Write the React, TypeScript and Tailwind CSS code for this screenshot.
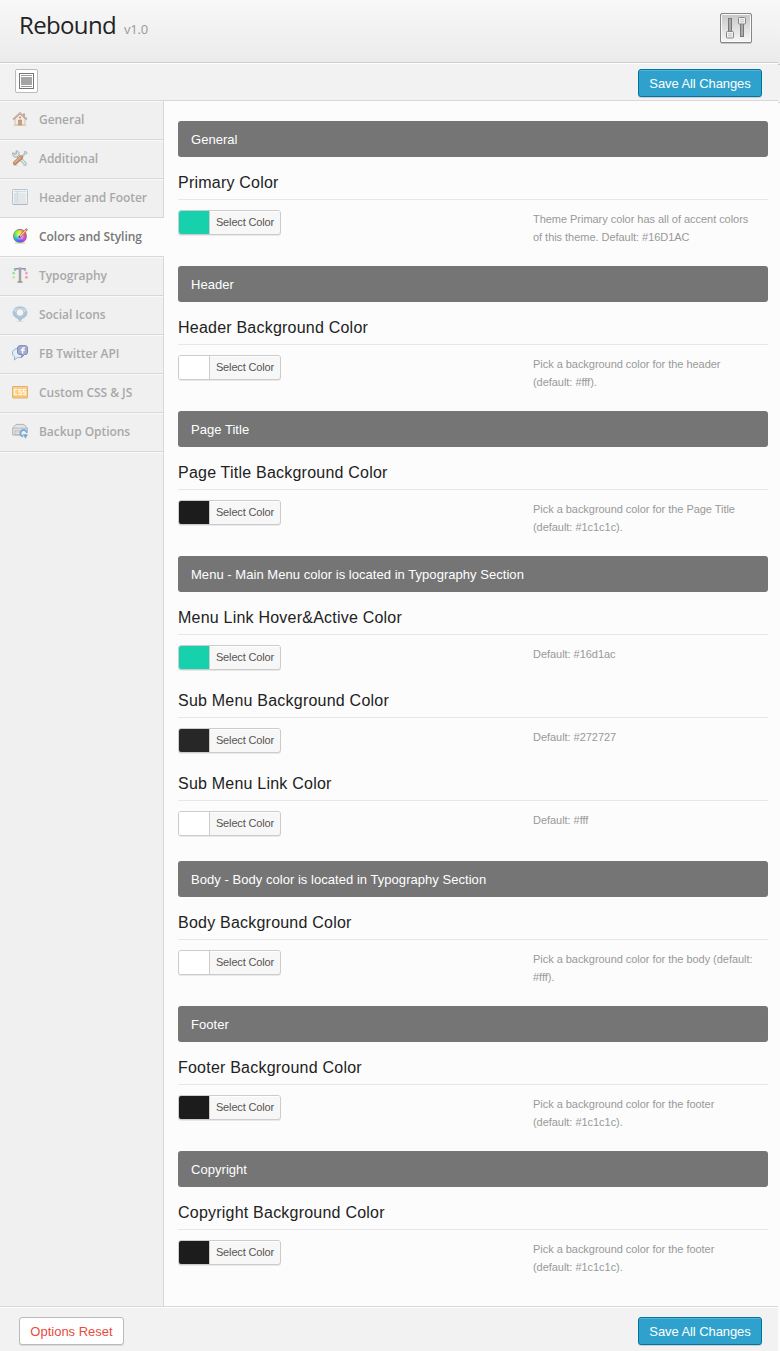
import type { ReactNode } from "react";

type Option = { title: string; color: string; help: string[] };
type Section = { name: string; options: Option[] };

const sections: Section[] = [
  { name: "General", options: [{ title: "Primary Color", color: "bg-[#16d1ac]", help: ["Theme Primary color has all of accent colors", "of this theme. Default: #16D1AC"] }] },
  { name: "Header", options: [{ title: "Header Background Color", color: "bg-white", help: ["Pick a background color for the header", "(default: #fff)."] }] },
  { name: "Page Title", options: [{ title: "Page Title Background Color", color: "bg-[#1c1c1c]", help: ["Pick a background color for the Page Title", "(default: #1c1c1c)."] }] },
  {
    name: "Menu - Main Menu color is located in Typography Section",
    options: [
      { title: "Menu Link Hover&Active Color", color: "bg-[#16d1ac]", help: ["Default: #16d1ac"] },
      { title: "Sub Menu Background Color", color: "bg-[#272727]", help: ["Default: #272727"] },
      { title: "Sub Menu Link Color", color: "bg-white", help: ["Default: #fff"] },
    ],
  },
  { name: "Body - Body color is located in Typography Section", options: [{ title: "Body Background Color", color: "bg-white", help: ["Pick a background color for the body (default:", "#fff)."] }] },
  { name: "Footer", options: [{ title: "Footer Background Color", color: "bg-[#1c1c1c]", help: ["Pick a background color for the footer", "(default: #1c1c1c)."] }] },
  { name: "Copyright", options: [{ title: "Copyright Background Color", color: "bg-[#1c1c1c]", help: ["Pick a background color for the footer", "(default: #1c1c1c)."] }] },
];

const Icon = ({ children }: { children: ReactNode }) => (
  <svg width="16" height="16" viewBox="0 0 16 16" className="mb-0.5 block shrink-0">{children}</svg>
);

const HouseIcon = () => (
  <Icon>
    <path d="M1 14.5h14" stroke="#dededb" />
    <path d="M11 2.5h2v4h-2z" fill="#c5a49b" />
    <path d="M3 7.5 8 3l5 4.5v6.5H3z" fill="#f4eae0" stroke="#c9b5a5" strokeWidth=".8" />
    <path d="M1.2 8.3 8 2.2l6.8 6.1" fill="none" stroke="#b99b92" strokeWidth="1.7" />
    <path d="M2.2 7.2 8 2l5.8 5.2" fill="none" stroke="#dbc8c2" strokeWidth=".7" />
    <path d="M6.5 9h3v5h-3z" fill="#ce9f7c" stroke="#ad8671" strokeWidth=".6" />
    <circle cx="8" cy="6.5" r="1" fill="#aa9290" />
    <path d="M3 13.5h3m4 0h3" stroke="#e8c9a9" />
  </Icon>
);

const ToolsIcon = () => (
  <Icon>
    <path d="M1 15.5h5m5 0h4" stroke="#d8d8d8" />
    <path d="m4 4 9 9.7" stroke="#a5b2b2" strokeWidth="3.4" strokeLinecap="round" />
    <path d="m4 4 9 9.7" stroke="#dce4e4" strokeWidth="1.9" strokeLinecap="round" />
    <path d="M.7 2.5v2.2A3 3 0 0 0 6 6.2 3 3 0 0 0 4 .8l.5 2.7-1.6 1z" fill="#dbe4e4" stroke="#9eacac" strokeWidth=".9" />
    <path d="m8 8 4-4.3L13 1l2.3 2-2.5 1.4L9 9" fill="#d5dddd" stroke="#9eabab" strokeWidth=".8" />
    <path d="m3 13 6-5.5" stroke="#ba8661" strokeWidth="4.2" strokeLinecap="round" />
    <path d="m3 12.5 5.5-5.2" stroke="#deaa82" strokeWidth="2" strokeLinecap="round" />
  </Icon>
);

const LayoutIcon = () => (
  <Icon>
    <rect x=".5" y=".5" width="15" height="15" rx=".7" fill="#f0f3f5" stroke="#b8c5d0" />
    <path d="M1 15.3h14" stroke="#acb4bd" />
    <path d="M2 2.5h12" stroke="#d3dee6" />
    <path d="M2 4h2.6v10H2z" fill="#d9e2e8" />
    <path d="M6 4h7.8v10H6z" fill="#e2e7ea" />
    <path d="M5.3 2v12" stroke="#bac9d4" strokeWidth=".8" />
  </Icon>
);

const ColorIcon = () => (
  <Icon>
    <ellipse cx="8" cy="15" rx="6" ry=".9" fill="#dedede" />
    <foreignObject x="1" y="1" width="14" height="14">
      <div className="h-[14px] w-[14px] rounded-full border border-[#77777799] bg-[radial-gradient(circle,#ffffffcc_0%,transparent_58%),conic-gradient(#ffd62e,#f6603e,#f044a0,#c445ff,#5b4dff,#259cf2,#38e775,#8df62c,#ffd62e)]" />
    </foreignObject>
    <path d="m7.5 9 6.8-7.3" stroke="#9f6451" strokeWidth="2.4" strokeLinecap="round" />
    <path d="m8 8.3 6-6.3" stroke="#ffd0b2" strokeWidth="1.1" />
    <path d="m7 9.6.4-1.6 1 .9z" fill="#333" />
    <path d="m13.5 2 1-1 1 1-1 1z" fill="#dd7a7b" />
  </Icon>
);

const TypeIcon = () => (
  <Icon>
    <path d="M3 3.5V1.7h10v1.8M8 1.7v13M5.5 15h5" fill="none" stroke="#929292" strokeWidth="1.6" />
    <path d="M8 3v11" stroke="#8a8a8a" strokeWidth="2.4" />
    <path d="M8 3v11" stroke="#c6c6c6" strokeWidth=".8" />
    <rect x="6.5" y=".3" width="3" height="2" fill="#a5a6ec" />
    <circle cx="3" cy="2.7" r="1.3" fill="#91c3be" />
    <circle cx="1.7" cy="6.2" r="1.4" fill="#9edab3" />
    <circle cx="1.7" cy="10.2" r="1.5" fill="#cce994" />
    <circle cx="13" cy="3" r="1.3" fill="#c6a5dd" />
    <circle cx="14.4" cy="6.2" r="1.4" fill="#dda6d6" />
    <circle cx="14.4" cy="10.2" r="1.5" fill="#f3a4a8" />
  </Icon>
);

const PinIcon = () => (
  <Icon>
    <ellipse cx="8" cy="15.2" rx="4" ry=".6" fill="#ddd" />
    <path d="M8 15.2c-1-2-2.1-2.6-4.2-3.8C-1.1 8.5.5.8 8 .8s9.1 7.7 4.2 10.6C10 12.6 9 13.2 8 15.2z" fill="#a9c6df" stroke="#9bbad5" strokeWidth=".7" />
    <path d="M1.5 5.2C2.3.8 13.3.8 14.5 5c-3 2-9 2-13 .2z" fill="#c7daea" />
    <circle cx="8" cy="6.5" r="3.8" fill="#f3f4f4" stroke="#b0b9bf" strokeWidth=".7" />
  </Icon>
);

const ChatIcon = () => (
  <Icon>
    <path d="M8 4C4 2.7.5 4.8.5 8c0 2 .8 3 2.2 3.7L2.4 15l3-2.5c4 .5 6.6-1 6.6-4" fill="#e2eff7" stroke="#91b3d4" />
    <path d="M8 .7h5.2c1.8 0 2.3 1 2.3 2.5v4c0 1.5-1 2.3-2.5 2.3h-.5l-2.8 2.8.2-2.8H8C6.4 9.5 5.6 8.7 5.6 7V3C5.6 1.6 6.6.7 8 .7z" fill="#a4acd0" stroke="#7c86b5" />
    <path d="M13 2.6c-2-.3-2.4.2-2.4 2v4M8.8 5h4" fill="none" stroke="#fff" strokeWidth="1.3" />
  </Icon>
);

const CssIcon = () => (
  <Icon>
    <rect x=".5" y="2.5" width="15" height="11.5" rx=".4" fill="#fbd083" stroke="#dfaf7d" />
    <path d="M1 13h14" stroke="#f2bc64" />
    <path d="M5.2 5.5H2.5v5h2.7M9.7 5.5H7v2.3h2.2v2.7H6.5M14 5.5h-2.7v2.3h2.2v2.7h-2.7" fill="none" stroke="#fffaf0" strokeWidth="1.2" />
  </Icon>
);

const BackupIcon = () => (
  <Icon>
    <path d="M.7 5 4 1.4h8L15.3 5v7H.7z" fill="#e2e4e5" stroke="#aeb2b5" />
    <path d="M1 5.2h14M3 7.8h9.8v4H3z" fill="none" stroke="#b5babd" />
    <path d="M3.5 9.8h6" stroke="#d0d4d6" />
    <circle cx="12" cy="10.3" r="4.2" fill="#f0f0f0" />
    <path d="M11 13.4A3.3 3.3 0 1 1 15 9.8" fill="none" stroke="#7eadd5" strokeWidth="2" />
    <path d="M10.6 11.2h5.2l-2.2 4.6z" fill="#79a7d1" />
  </Icon>
);

const menu: { label: string; icon: ReactNode; active?: boolean }[] = [
  { label: "General", icon: <HouseIcon /> },
  { label: "Additional", icon: <ToolsIcon /> },
  { label: "Header and Footer", icon: <LayoutIcon /> },
  { label: "Colors and Styling", icon: <ColorIcon />, active: true },
  { label: "Typography", icon: <TypeIcon /> },
  { label: "Social Icons", icon: <PinIcon /> },
  { label: "FB Twitter API", icon: <ChatIcon /> },
  { label: "Custom CSS & JS", icon: <CssIcon /> },
  { label: "Backup Options", icon: <BackupIcon /> },
];

const SlidersIcon = () => (
  <svg width="34" height="34" viewBox="0 0 34 34" className="block">
    <defs>
      <linearGradient id="panel" x2="0" y2="1"><stop stopColor="#c6c6c6" /><stop offset="1" stopColor="#f8f8f8" /></linearGradient>
    </defs>
    <rect x="0" y="2" width="32" height="30" rx="2" fill="#aaa" opacity=".6" />
    <rect x=".5" y="1.5" width="31" height="29" rx="1.5" fill="url(#panel)" stroke="#858585" />
    <rect x="1.5" y="2.5" width="29" height="27" rx="1" fill="none" stroke="#fafafa" />
    <rect x="8.5" y="6.5" width="3" height="14" fill="#aaa" stroke="#777" />
    <rect x="20.5" y="10.5" width="3" height="14" fill="#aaa" stroke="#777" />
    <rect x="6.5" y="19.5" width="7" height="6.5" rx="1" fill="#f3f3f3" stroke="#858585" />
    <rect x="18.5" y="5.5" width="7" height="6.5" rx="1" fill="#f3f3f3" stroke="#858585" />
    <path d="M8 21.8h4M8 23.8h4M20 7.8h4M20 9.8h4" stroke="#b5b5b5" strokeWidth=".8" />
  </svg>
);

const SaveButton = () => (
  <button className="h-7 w-[124px] whitespace-nowrap rounded-[3px] border border-[#0074a2] bg-[#2ea2cc] text-[13px] leading-[27px] tracking-[-0.08px] text-white shadow-[inset_0_1px_0_rgba(120,200,230,0.5),0_1px_0_rgba(0,0,0,0.15)]">
    Save All Changes
  </button>
);

const ColorOption = ({ option, last }: { option: Option; last: boolean }) => (
  <div>
    <h3 className="h-[43px] border-b border-[#e7e7e7] pt-[14px] text-base leading-6 tracking-[0.22px] text-[#222]">{option.title}</h3>
    <div className={last ? "mb-5 flex min-h-10 pt-[10px]" : "flex min-h-10 pt-[10px]"}>
      <button className="flex h-[25px] w-[103px] overflow-hidden rounded-[3px] border border-[#ccc] bg-[#f7f7f7] shadow-[0_1px_0_rgba(0,0,0,0.08)]">
        <span className={`block h-full w-[30px] ${option.color}`} />
        <span className="h-full flex-1 whitespace-nowrap border-l border-[#ccc] text-center text-[11px] leading-[23px] tracking-[-0.15px] text-[#555] shadow-[inset_0_1px_0_#fff]">Select Color</span>
      </button>
      <p className="ml-[252px] whitespace-nowrap text-[11px] leading-[18px] tracking-[-0.04px] text-[#999]">
        {option.help.map((line) => <span key={line} className="block">{line}</span>)}
      </p>
    </div>
  </div>
);

export default function App() {
  return (
    <div className="flex h-[1351px] w-[780px] overflow-hidden bg-[#f8f8f8] font-['Liberation_Sans',Arial,sans-serif]">
      <div className="flex w-[778px] flex-col">
        <header className="flex h-[63px] shrink-0 justify-between border-b border-[#ccc] bg-linear-to-b from-[#f8f8f8] to-[#ebebeb] pl-[19px] pr-6">
          <div className="flex h-[52px] items-baseline pt-[9px] font-['Open_Sans',sans-serif]">
            <h1 className="text-2xl leading-8 tracking-[-0.65px] text-[#222]">Rebound</h1>
            <span className="ml-2 text-[13px] tracking-[-0.2px] text-[#999]">v1.0</span>
          </div>
          <div className="pt-[12px]"><SlidersIcon /></div>
        </header>
        <div className="flex h-[38px] shrink-0 items-start justify-between border-b border-[#d8d8d8] bg-[#f2f2f2] pl-[15px] pr-4 pt-[6px] shadow-[inset_0_1px_0_#fff]">
          <button className="flex h-6 w-[23px] items-center justify-center rounded-[2px] border border-[#bbb] bg-white">
            <svg width="15" height="16" viewBox="0 0 15 16">
              <rect x=".5" y=".5" width="14" height="15" fill="#fff" stroke="#777" />
              <path d="M2 2.5h11M2 13.5h11" stroke="#999" />
              <path d="M2 4h11v8H2z" fill="#a5a5a5" />
            </svg>
          </button>
          <SaveButton />
        </div>
        <div className="flex h-[1205px] shrink-0">
          <nav className="flex w-[164px] shrink-0 flex-col bg-[#f0f0f0] font-['Open_Sans',sans-serif]">
            {menu.map(({ label, icon, active }) => (
              <a
                key={label}
                className={
                  active
                    ? "flex h-[39px] items-center gap-[11px] border-b border-[#d8d8d8] bg-[#fcfcfc] pl-3 text-xs font-semibold tracking-[-0.04px] text-[#777]"
                    : "flex h-[39px] items-center gap-[11px] border-b border-r border-[#d8d8d8] pl-3 text-xs font-semibold tracking-[-0.04px] text-[#a8a8a8] shadow-[inset_0_1px_0_#f9f9f9]"
                }
              >
                {icon}
                <span className="whitespace-nowrap">{label}</span>
              </a>
            ))}
            <div className="flex-1 border-r border-[#d8d8d8] shadow-[inset_0_1px_0_#f9f9f9]" />
          </nav>
          <main className="flex-1 bg-[#fcfcfc] pl-[14px] pr-[10px] pt-5">
            {sections.map((section) => (
              <section key={section.name}>
                <h2 className="h-9 rounded-[3px] bg-[#757575] pl-[13px] pt-px text-[13px] leading-9 tracking-[0.04px] text-white">{section.name}</h2>
                {section.options.map((option, i) => (
                  <ColorOption key={option.title} option={option} last={i === section.options.length - 1} />
                ))}
              </section>
            ))}
          </main>
        </div>
        <footer className="flex flex-1 items-start justify-between border-t border-[#d8d8d8] bg-[#f2f2f2] pl-[19px] pr-4 pt-[10px] shadow-[inset_0_1px_0_#fff]">
          <button className="h-7 w-[105px] whitespace-nowrap rounded-[3px] border border-[#bbb] bg-white text-[13px] leading-[27px] text-[#e84c3d] shadow-[0_1px_0_rgba(0,0,0,0.1)]">Options Reset</button>
          <SaveButton />
        </footer>
      </div>
      <div className="flex w-[2px] flex-col">
        <div className="h-[65px] border-b border-[#ccc] bg-linear-to-b from-[#f8f8f8] to-[#ebebeb]" />
        <div className="h-[38px] border-b border-[#d8d8d8] bg-[#f2f2f2]" />
        <div className="flex-1 bg-[#fcfcfc]" />
      </div>
    </div>
  );
}
